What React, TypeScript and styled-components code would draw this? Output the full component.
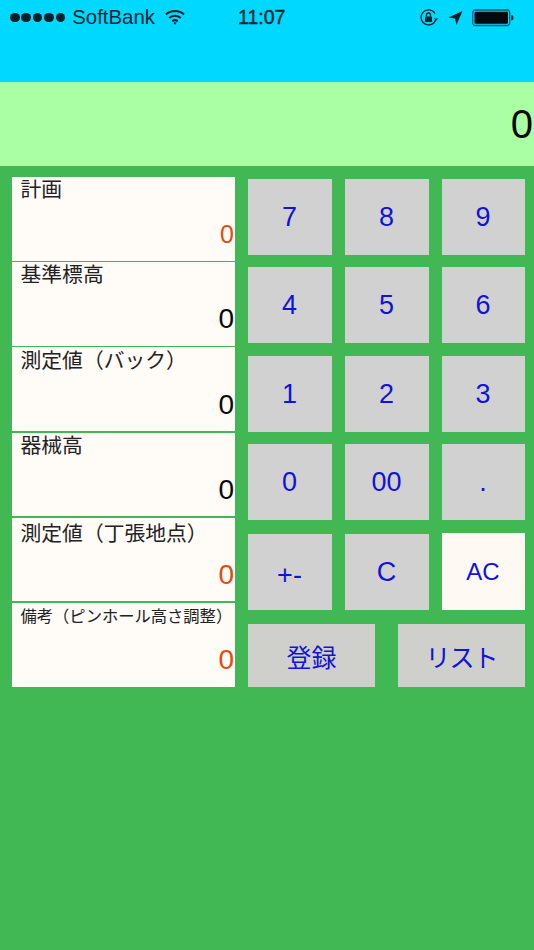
import React from "react";
import styled, { createGlobalStyle } from "styled-components";

const Global = createGlobalStyle`
  html, body { margin: 0; padding: 0; background: #41b853; }
  body { font-family: "Liberation Sans", "Noto Sans CJK JP", sans-serif; }
`;
const Page = styled.div`
  width: 534px; height: 950px; overflow: hidden; background: #41b853;
  display: flex; flex-direction: column;
`;
const Header = styled.div`
  height: 82px; background: #00d8ff; box-sizing: border-box;
`;
const StatusBar = styled.div`
  height: 35px; position: relative; display: flex; align-items: center;
  padding: 0 0 0 10px; color: #0b2530; font-size: 20.4px;
`;
const Dots = styled.div`display: flex; gap: 1.7px; margin-right: 7px;`;
const Dot = styled.span`width: 9.7px; height: 9.7px; border-radius: 50%; background: #07202a;`;
const Carrier = styled.span`margin-right: 10px;`;
const Clock = styled.span`
  position: absolute; left: 238px; top: 6px; font-size: 19.5px; line-height: 22px;
  -webkit-text-stroke: 0.4px #0b2530;
`;
const StatusRight = styled.div`
  margin-left: auto; margin-right: 20px; display: flex; align-items: center; gap: 9px;
`;
const Display = styled.div`
  height: 84px; background: #aaffa5; display: flex; align-items: center; justify-content: flex-end;
  font-size: 40px; color: #0a0a0a; padding-right: 1px; box-sizing: border-box;
`;
const Body = styled.div`
  display: flex; padding: 11px 9px 0 11.5px; align-items: flex-start;
`;
const Cells = styled.div`
  width: 223.5px; display: flex; flex-direction: column; gap: 1.5px; margin-right: 13px;
`;
const Cell = styled.div`
  height: 83.7px; background: #fffbf7; position: relative; padding-left: 9px;
  box-sizing: border-box; color: #222;
`;
const CellLabel = styled.div<{ $small?: boolean; $drop: number }>`
  font-size: ${p => (p.$small ? 16.3 : 20.8)}px;
  line-height: ${p => (p.$small ? 22 : 26)}px;
  padding-top: ${p => p.$drop}px;
  white-space: nowrap;
`;
const CellValue = styled.div<{ $accent?: boolean; $size: number }>`
  position: absolute; right: 1px; bottom: 11.5px; font-size: ${p => p.$size}px;
  line-height: 30px; color: ${p => (p.$accent ? "#e24b12" : "#0a0a0a")};
`;
const Pad = styled.div`display: flex; flex-direction: column; flex: 1; padding-top: 2px;`;
const KeyRow = styled.div<{ $top: number }>`
  display: grid; grid-template-columns: 84px 84px 83px; column-gap: 13px;
  margin-top: ${p => p.$top}px; align-items: end;
`;
const WideRow = styled.div`
  display: flex; justify-content: space-between; margin-top: 14px;
`;
const Key = styled.div<{ $light?: boolean; $drop?: number }>`
  height: ${p => (p.$light ? 77 : 76)}px;
  background: ${p => (p.$light ? "#fff8f3" : "#d1d1d1")};
  color: #1212d8; font-size: ${p => (p.$light ? 24 : 27)}px;
  padding-top: ${p => p.$drop ?? 0}px; padding-right: 1px;
  display: flex; align-items: center; justify-content: center; box-sizing: border-box;
`;
const WideKey = styled.div`
  width: 127px; height: 63px; background: #cfcfcb; color: #1212d8; font-size: 25px;
  display: flex; align-items: center; justify-content: center;
`;
const TightText = styled.span`letter-spacing: -1px;`;

const Wifi = () => (
  <svg width="20" height="16" viewBox="0 0 20 16" fill="none" stroke="#07202a" strokeWidth="2.1" style={{ marginTop: -1 }}>
    <path d="M1 5.5C6 .9 14 .9 19 5.5" />
    <path d="M4.2 9c3.3-3 8.3-3 11.6 0" />
    <path d="M7.3 12.2c1.6-1.3 3.8-1.300 5.400 0" />
    <path d="M10 15.7l-1.700-1.900c1-.7 2.400-.7 3.400 0z" fill="#07202a" stroke="none" />
  </svg>
);
const RotationLock = () => (
  <svg width="20" height="20" viewBox="0 0 20 20" fill="none" stroke="#07202a" strokeWidth="1.3">
    <path d="M16.8 11.5A7.5 7.5 0 1 1 16 5.5" />
    <path d="M15 10.5l2 2.2 2.5-2.2" fill="#07202a" stroke="none" />
    <rect x="6" y="8.5" width="7" height="5.5" rx="0.8" fill="#07202a" stroke="none" />
    <path d="M7.5 8.5V7a2 2 0 0 1 4 0v1.500" />
  </svg>
);
const Arrow = () => (
  <svg width="15" height="16" viewBox="0 0 16 16"><path d="M15.500.5L.5 7.500l7 1 1.500 7z" fill="#07202a" /></svg>
);
const Battery = () => (
  <svg width="42" height="18" viewBox="0 0 42 18">
    <rect x="0.7" y="1" width="37" height="15.5" rx="2.5" fill="none" stroke="#0d5e72" strokeWidth="1.3" />
    <rect x="2.5" y="2.8" width="33.5" height="12" rx="1" fill="#020a0e" />
    <path d="M39.3 6v5.5c1.4 0 2.2-1 2.2-2.7S40.7 6 39.3 6z" fill="#07202a" />
  </svg>
);

const cells: { label: string; accent?: boolean; small?: boolean; size: number; drop: number }[] = [
  { label: "計画", accent: true, size: 25, drop: 0 },
  { label: "基準標高", size: 28, drop: 0 },
  { label: "測定値（バック）", size: 28, drop: 1 },
  { label: "器械高", size: 28, drop: 0 },
  { label: "測定値（丁張地点）", accent: true, size: 28, drop: 3 },
  { label: "備考（ピンホール高さ調整）", accent: true, small: true, size: 28, drop: 2 },
];
const rows: { top: number; keys: { t: string; light?: boolean; drop?: number }[] }[] = [
  { top: 0, keys: [{ t: "7" }, { t: "8" }, { t: "9" }] },
  { top: 12, keys: [{ t: "4" }, { t: "5" }, { t: "6" }] },
  { top: 13, keys: [{ t: "1" }, { t: "2" }, { t: "3" }] },
  { top: 12, keys: [{ t: "0" }, { t: "00" }, { t: "." }] },
  { top: 13, keys: [{ t: "+-", drop: 6 }, { t: "C" }, { t: "AC", light: true }] },
];

export default function App() {
  return (
    <Page>
      <Global />
      <Header>
        <StatusBar>
          <Dots>{[0, 1, 2, 3, 4].map(i => <Dot key={i} />)}</Dots>
          <Carrier>SoftBank</Carrier>
          <Wifi />
          <Clock>11:07</Clock>
          <StatusRight>
            <RotationLock />
            <Arrow />
            <Battery />
          </StatusRight>
        </StatusBar>
      </Header>
      <Display>0</Display>
      <Body>
        <Cells>
          {cells.map(c => (
            <Cell key={c.label}>
              <CellLabel $small={c.small} $drop={c.drop}>{c.label}</CellLabel>
              <CellValue $accent={c.accent} $size={c.size}>0</CellValue>
            </Cell>
          ))}
        </Cells>
        <Pad>
          {rows.map(r => (
            <KeyRow key={r.keys[0].t} $top={r.top}>
              {r.keys.map(k => (
                <Key key={k.t} $light={k.light} $drop={k.drop}>{k.t}</Key>
              ))}
            </KeyRow>
          ))}
          <WideRow>
            <WideKey>登録</WideKey>
            <WideKey><TightText>リスト</TightText></WideKey>
          </WideRow>
        </Pad>
      </Body>
    </Page>
  );
}
